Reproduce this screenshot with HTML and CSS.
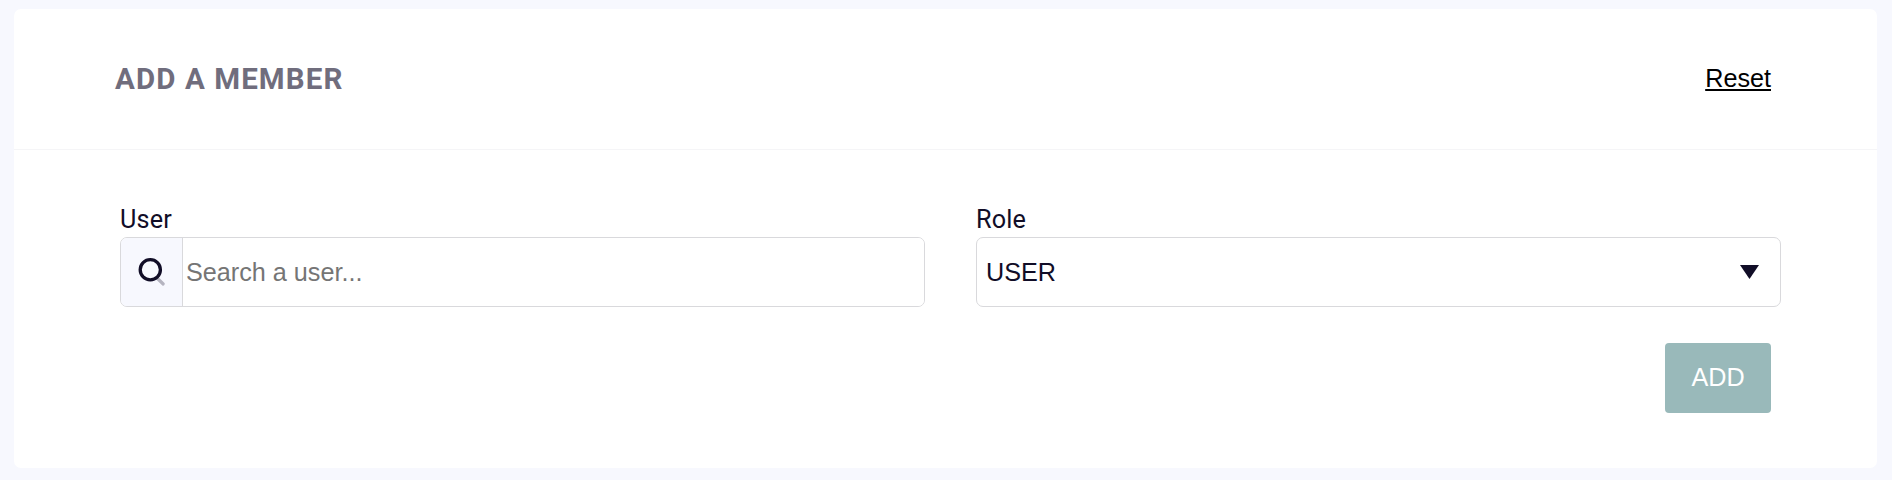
FILE: index.html
```
<!DOCTYPE html>
<html lang="en">
<head>
<meta charset="utf-8">
<title>Add a member</title>
<link rel="stylesheet" href="styles.css">
</head>
<body>
<section class="card">
  <header class="card-header">
    <h2 class="title">ADD A MEMBER</h2>
    <a class="reset" href="#">Reset</a>
  </header>
  <form class="form">
    <div class="fields">
      <div class="field">
        <label class="label" for="user">User</label>
        <div class="control">
          <span class="search-icon">
            <svg width="28" height="30" viewBox="0 0 28 30" fill="none">
              <path d="M19.5 21.5L25.2 27" stroke="#b5b4c0" stroke-width="3.2" stroke-linecap="round"/>
              <circle cx="12.3" cy="12.8" r="10.1" stroke="#110d27" stroke-width="3.3"/>
            </svg>
          </span>
          <input class="input" id="user" type="text" placeholder="Search a user...">
        </div>
      </div>
      <div class="field">
        <span class="label">Role</span>
        <div class="control select">
          <span class="value">USER</span>
          <svg class="arrow" width="19" height="14" viewBox="0 0 19 14"><path d="M0 0H19L9.5 14Z" fill="#110d27"/></svg>
        </div>
      </div>
    </div>
    <div class="actions"><button class="add" type="button">ADD</button></div>
  </form>
</section>
</body>
</html>
```
FILE: styles.css
```
* { box-sizing: border-box; }
body {
  margin: 0;
  padding: 9px 15px 12px 14px;
  height: 480px;
  background: #f7f8fe;
  color: #110d27;
  font-family: "Liberation Sans", Arial, sans-serif;
  font-size: 25.2px;
}
.card {
  height: 459px;
  background: #fff;
  border-radius: 7px;
}
.card-header {
  height: 141px;
  padding: 0 106px 0 101px;
  border-bottom: 1px solid #f5f5f7;
  display: flex;
  align-items: center;
  justify-content: space-between;
}
.title {
  margin: 0;
  font: 700 29.5px/36px Roboto, sans-serif;
  letter-spacing: 1.1px;
  color: #706d7d;
}
.reset {
  line-height: 30px;
  padding-bottom: 2px;
  color: #000;
  text-decoration: underline;
  text-decoration-thickness: 2px;
  text-underline-offset: 2px;
}
.form { padding: 51px 96px 0 106px; }
.fields {
  display: grid;
  grid-template-columns: 1fr 1fr;
  gap: 51px;
}
.label {
  display: block;
  height: 36px;
  font: 400 25.2px/38px Roboto, sans-serif;
  letter-spacing: 0.2px;
}
.control {
  height: 70px;
  display: flex;
  align-items: center;
  border: 1px solid #d9d9dc;
  border-radius: 7px;
  overflow: hidden;
}
.search-icon {
  width: 62px;
  height: 100%;
  padding-left: 17px;
  display: flex;
  align-items: center;
  background: #f7f8fe;
  border-right: 1px solid #d9d9dc;
}
.input {
  flex: 1;
  height: 100%;
  padding: 0 3px;
  border: 0;
  outline: 0;
  font: inherit;
}
.input::placeholder { color: #757575; }
.select {
  padding: 0 21px 0 9px;
  justify-content: space-between;
}
.actions {
  padding: 36px 10px 0;
  display: flex;
  justify-content: flex-end;
}
.add {
  width: 106px;
  height: 70px;
  padding: 0 0 2px;
  border: 0;
  border-radius: 4px;
  background: #99b9ba;
  color: #fff;
  font: inherit;
}
```
